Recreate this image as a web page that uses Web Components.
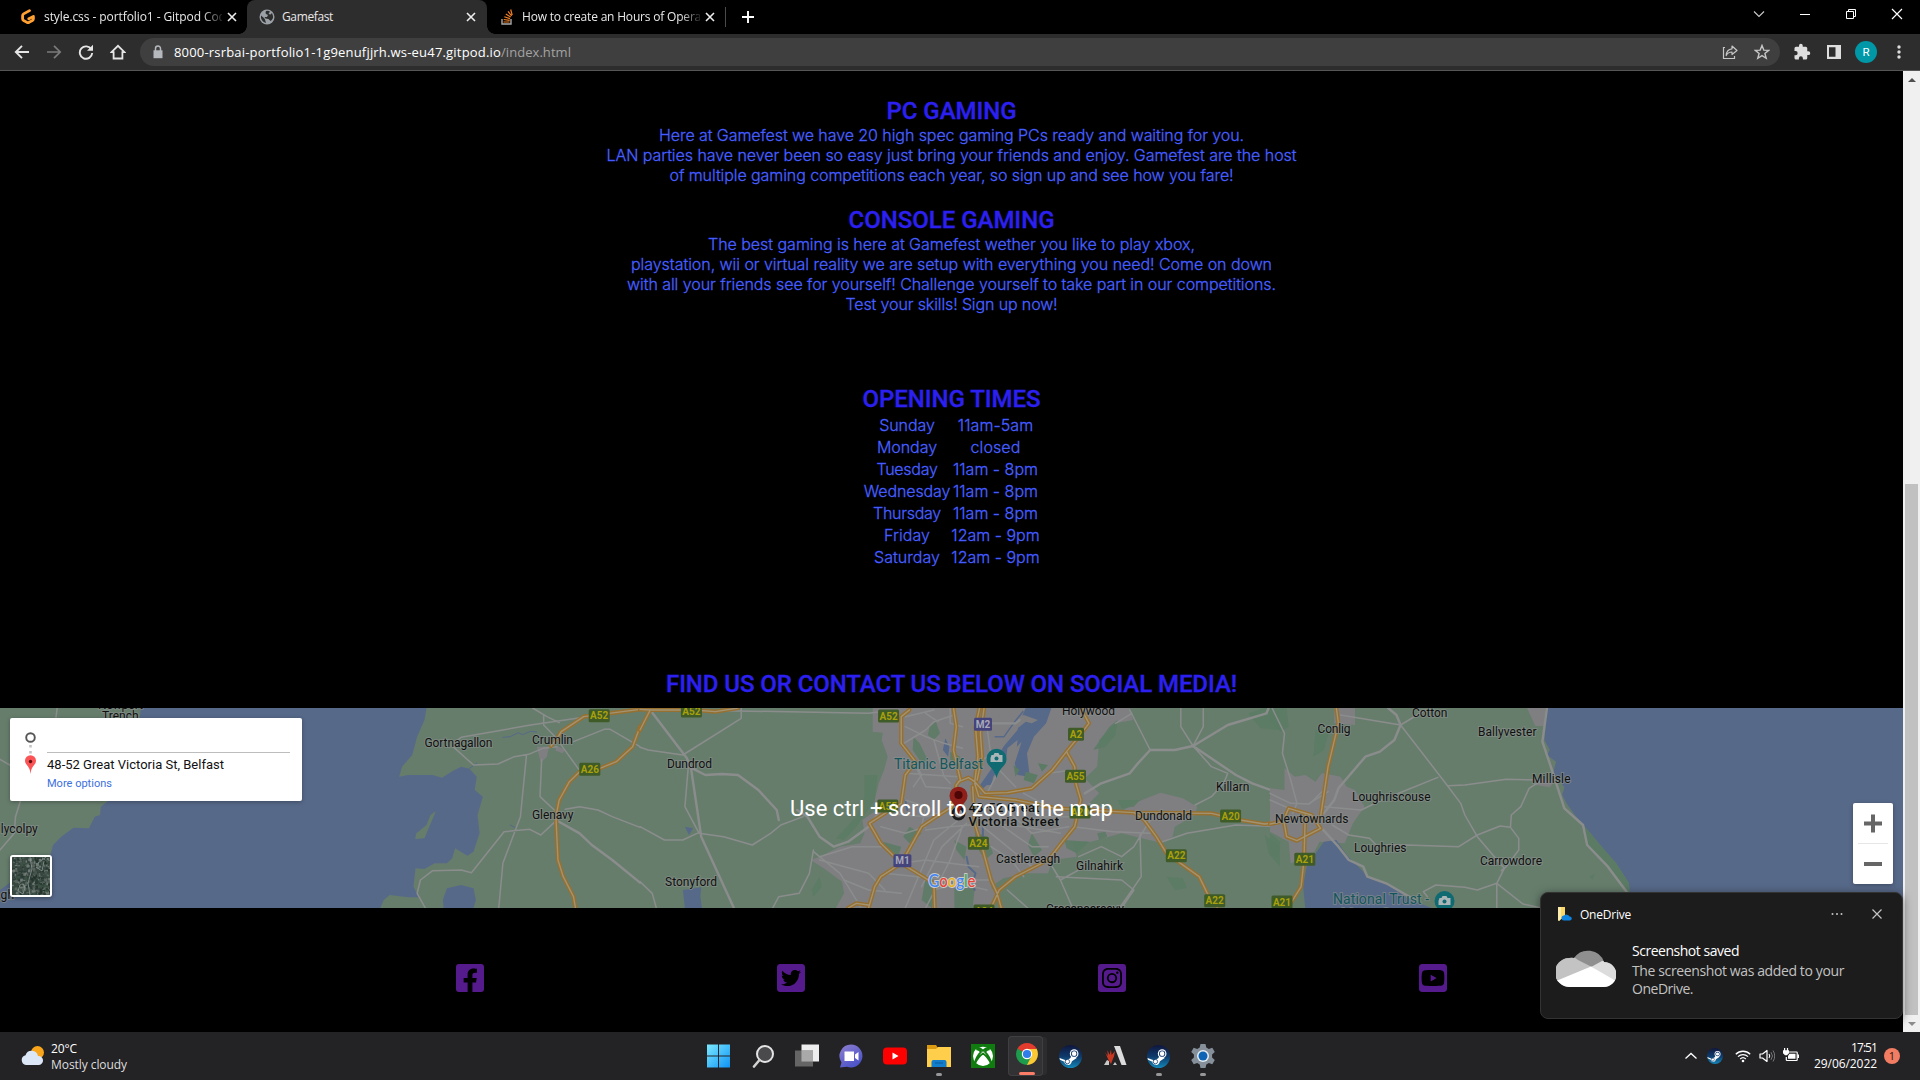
<!DOCTYPE html>
<html lang="en">
<head>
<meta charset="utf-8">
<title>Gamefast</title>
<style>
html,body{margin:0;height:100%;background:#000;overflow:hidden}
</style>
</head>
<body>
<desktop-screen></desktop-screen>

<template id="t-desktop">
<style>
:host{display:flex;flex-direction:column;width:1920px;height:1080px;background:#000;position:relative;font-family:"Open Sans","Liberation Sans",sans-serif}
.view{display:flex;flex:none;height:961px}
toast-card{position:absolute;left:1540px;top:892px}
</style>
<browser-tabs></browser-tabs>
<browser-toolbar></browser-toolbar>
<div class="view"><game-page></game-page><scroll-bar></scroll-bar></div>
<task-bar></task-bar>
<toast-card></toast-card>
</template>

<template id="t-tabs">
<style>
:host{display:flex;height:34px;background:#000;color:#e8e8e8;font-size:12px;justify-content:space-between}
.tabs{display:flex;align-items:stretch}
.tab{display:flex;align-items:center;box-sizing:border-box;width:239px;padding:0 9px 6px 12px;position:relative;height:34px}
.tab svg{flex:none}
.tab .t{margin-left:8px;flex:1;white-space:nowrap;overflow:hidden;line-height:18px}
.first{width:247px;padding-left:20px;padding-right:9px}
.on{background:#2e2d2e;border-radius:8px 8px 0 0;width:240px;padding-right:10px}
.on .t,.last .t{margin-left:7px!important}
.on:before,.on:after{content:"";position:absolute;bottom:0;width:8px;height:8px}
.on:before{left:-8px;background:radial-gradient(circle at 0 0,transparent 7.5px,#2e2d2e 8px)}
.on:after{right:-8px;background:radial-gradient(circle at 100% 0,transparent 7.5px,#2e2d2e 8px)}
.tab .fade{margin-right:4px;-webkit-mask:linear-gradient(90deg,#000 89%,rgba(0,0,0,.15) 100%);mask:linear-gradient(90deg,#000 89%,rgba(0,0,0,.15) 100%)}
.first,.last,.on{padding-top:6px}
.x{width:12px;height:12px}
.last{width:238px;padding-right:9px}
.sep{width:1px;height:20px;background:#4a4a4c;margin:7px 15px 0 0}
.plus{margin-top:10px}
.win{display:flex;padding-right:15px;gap:30px;align-items:center;height:28px}
</style>
<div class="tabs">
 <div class="tab first">
  <svg width="16" height="16" viewBox="0 0 16 16"><path d="M9.500 1.600 3.600 4.900Q2.600 5.500 2.600 6.700V9.800q0 1.100 1 1.700l3.400 1.900q1 .5 2 0l3.400-1.900q1-.6 1-1.700V7.400L8.800 9.800" fill="none" stroke="#ffa033" stroke-width="2.800" stroke-linejoin="round" stroke-linecap="round"/></svg>
  <div class="t fade"><fit-text w="188.500">style.css - portfolio1 - Gitpod Code</fit-text></div>
  <svg class="x" viewBox="0 0 12 12"><path d="M2 2l8 8M10 2l-8 8" stroke="#eee" stroke-width="1.6"/></svg>
 </div>
 <div class="tab on">
  <svg width="16" height="16" viewBox="0 0 16 16"><circle cx="8" cy="8" r="7.5" fill="#9aa0a6"/><path d="M2 6.500l3 2.500 1 1.500 1 3.500Q3 13 2 9zM7 2q-1 2 0 3l2 1-1 2H5.500l1 1.500 3 .5 2 2q3-2 2.500-5l-1-3-1.500 1.500-2-.5L11 2.500Q9 1.500 7 2z" fill="#2e2d2e"/></svg>
  <div class="t"><fit-text w="51">Gamefast</fit-text></div>
  <svg class="x" viewBox="0 0 12 12"><path d="M2 2l8 8M10 2l-8 8" stroke="#eee" stroke-width="1.6"/></svg>
 </div>
 <div class="tab last">
  <svg width="16" height="16" viewBox="0 0 16 16"><path d="M3 10v5h9v-5" fill="none" stroke="#aaa" stroke-width="1.400"/><path d="M4.500 13h6M4.700 10.500l6 .8M5.300 7.800l5.700 1.800M6.800 5l4.900 3.100M9 2.300l3.600 4.600M11.700.5l1.500 5.600" stroke="#f48024" stroke-width="1.200"/></svg>
  <div class="t fade"><fit-text w="186">How to create an Hours of Operati</fit-text></div>
  <svg class="x" viewBox="0 0 12 12"><path d="M2 2l8 8M10 2l-8 8" stroke="#eee" stroke-width="1.6"/></svg>
 </div>
 <div class="sep"></div>
 <svg class="plus" width="14" height="14" viewBox="0 0 14 14"><path d="M7 1v12M1 7h12" stroke="#fff" stroke-width="1.900"/></svg>
</div>
<div class="win">
 <svg width="16" height="16" viewBox="0 0 16 16"><path d="M3 5.500l5 5 5-5" fill="none" stroke="#ccc" stroke-width="1.100"/></svg>
 <svg width="16" height="16" viewBox="0 0 16 16"><path d="M3 8.500h10" stroke="#fff"/></svg>
 <svg width="16" height="16" viewBox="0 0 16 16"><path d="M3.500 5.500h7v7h-7zM5.500 5.500v-2h7v7h-2" fill="none" stroke="#fff"/></svg>
 <svg width="16" height="16" viewBox="0 0 16 16"><path d="M3 3l10 10M13 3L3 13" stroke="#fff" stroke-width="1.200"/></svg>
</div>
</template>

<template id="t-toolbar">
<style>
:host{display:flex;box-sizing:border-box;height:37px;background:#2e2d2e;border-bottom:1px solid #565657;align-items:center;padding:0 13px 0 14px}
.nav{display:flex;gap:16px;width:126px;flex:none}
.box{display:flex;align-items:center;width:1640px;height:28px;border-radius:14px;background:#3f3f3f;box-sizing:border-box;padding:0 10px;font-size:14px;color:#fff;line-height:20px}
.url{margin-left:8px;flex:1;font-size:13px;white-space:nowrap}
.p{color:#a3a3a3}
.star{margin-left:16px}
.r{display:flex;gap:15px;margin-left:13px;align-items:center}
.av{width:22px;height:22px;border-radius:50%;background:#0097a7;color:#fff;font:11.500px/22px Roboto,sans-serif;text-align:center;margin:0 -2px 0 -1px}
svg{flex:none}
</style>
<div class="nav">
 <svg width="16" height="16" viewBox="0 0 16 16"><path d="M15 8H2M8 1.800L1.800 8 8 14.200" fill="none" stroke="#e6e6e6" stroke-width="1.900"/></svg>
 <svg width="16" height="16" viewBox="0 0 16 16"><path d="M1 8h13M8 1.800L14.200 8 8 14.200" fill="none" stroke="#7b7b7b" stroke-width="1.700"/></svg>
 <svg width="16" height="16" viewBox="0 0 16 16"><path d="M13.400 5.500A6.200 6.200 0 1 0 14.200 9" fill="none" stroke="#e6e6e6" stroke-width="1.900"/><path d="M15 .8v6H9z" fill="#e6e6e6"/></svg>
 <svg width="16" height="16" viewBox="0 0 16 16"><path d="M1.500 8.200L8 1.800l6.500 6.400H12.400V14.500H3.600V8.200z" fill="none" stroke="#e6e6e6" stroke-width="1.800"/></svg>
</div>
<div class="box">
 <svg width="16" height="16" viewBox="0 0 16 16"><path d="M3.500 6.300h9v7.900h-9z" fill="#b5b9be"/><path d="M5.500 7V4.500a2.500 2.500 0 0 1 5 0V7" fill="none" stroke="#b5b9be" stroke-width="1.500"/></svg>
 <div class="url"><fit-text w="327">8000-rsrbai-portfolio1-1g9enufjjrh.ws-eu47.gitpod.io</fit-text><fit-text class="p" w="70">/index.html</fit-text></div>
 <svg width="16" height="16" viewBox="0 0 16 16"><path d="M3 3.500H1.500v11h11V12" fill="none" stroke="#c6c6c6" stroke-width="1.200"/><path d="M10 2l5 4.500-5 4V8Q6 8 4.200 11.500 4.600 5.300 10 4.800z" fill="none" stroke="#c6c6c6" stroke-width="1.200" stroke-linejoin="round"/></svg>
 <svg class="star" width="16" height="16" viewBox="0 0 16 16"><path d="M8 1.500l1.800 4.600 4.900.3-3.800 3.100 1.300 4.800L8 11.600l-4.200 2.700 1.300-4.800L1.300 6.400l4.900-.3z" fill="none" stroke="#c6c6c6" stroke-width="1.400"/></svg>
</div>
<div class="r">
 <svg width="18" height="18" viewBox="0 0 24 24"><path fill="#dedede" d="M20.500 11H19V7a2 2 0 0 0-2-2h-4V3.500a2.500 2.500 0 0 0-5 0V5H4a2 2 0 0 0-2 2v3.800h1.500a2.700 2.700 0 0 1 0 5.400H2V20a2 2 0 0 0 2 2h3.800v-1.500a2.700 2.700 0 0 1 5.400 0V22H17a2 2 0 0 0 2-2v-4h1.500a2.500 2.500 0 0 0 0-5z"/></svg>
 <svg width="16" height="16" viewBox="0 0 16 16"><path d="M1 1h14v14H1zM3 3.200v9.600h6.500V3.200z" fill="#dedede" fill-rule="evenodd"/></svg>
</div>
<div class="av" style="margin-left:13px">R</div>
<svg style="margin-left:16px" width="16" height="16" viewBox="0 0 16 16"><g fill="#dedede"><circle cx="8" cy="3" r="1.700"/><circle cx="8" cy="8" r="1.700"/><circle cx="8" cy="13" r="1.700"/></g></svg>
</template>

<template id="t-scroll">
<style>
:host{display:flex;flex-direction:column;width:17px;height:961px;background:#f0f0f0}
.b{height:17px;display:flex;align-items:center;justify-content:center}
.up{border:4px solid transparent;border-top:0;border-bottom:4px solid #505050}
.dn{border:4px solid transparent;border-bottom:0;border-top:4px solid #8b8b8b}
.thumb{margin:396px 2px 0;flex:1;background:#c1c1c1}
</style>
<div class="b"><div class="up"></div></div><div class="thumb"></div><div class="b"><div class="dn"></div></div>
</template>

<template id="t-page">
<style>
:host{display:flex;flex-direction:column;align-items:center;width:1903px;height:961px;background:#000;color:#5069ff;font:300 16px/20px Inter,sans-serif;overflow:hidden;-webkit-text-stroke:.3px #3a50ff}
h2{margin:0;font:500 24px/28px Roboto,sans-serif;color:#2c20f0;white-space:nowrap;-webkit-text-stroke:.35px #2c20f0}
.pc{margin-top:26px}.con{margin-top:21px}.op{margin-top:71px}.find{margin-top:102px}
p{margin:0;display:flex;flex-direction:column;align-items:center}
.times{display:grid;grid-template-columns:87px 88px;column-gap:1px;margin-top:1px;line-height:22px;justify-items:center}
map-view{margin-top:10px;-webkit-text-stroke:0}
.social{display:flex;gap:293px;margin-top:56px}
.social svg{display:block;fill:#551a8b}
</style>
<h2 class="pc"><fit-text w="130">PC GAMING</fit-text></h2>
<p><fit-text w="585">Here at Gamefest we have 20 high spec gaming PCs ready and waiting for you.</fit-text>
<fit-text w="690">LAN parties have never been so easy just bring your friends and enjoy. Gamefest are the host</fit-text>
<fit-text w="564">of multiple gaming competitions each year, so sign up and see how you fare!</fit-text></p>
<h2 class="con"><fit-text w="206">CONSOLE GAMING</fit-text></h2>
<p><fit-text w="487">The best gaming is here at Gamefest wether you like to play xbox,</fit-text>
<fit-text w="641">playstation, wii or virtual reality we are setup with everything you need! Come on down</fit-text>
<fit-text w="649">with all your friends see for yourself! Challenge yourself to take part in our competitions.</fit-text>
<fit-text w="212">Test your skills! Sign up now!</fit-text></p>
<h2 class="op"><fit-text w="178">OPENING TIMES</fit-text></h2>
<div class="times">
<fit-text w="55.500">Sunday</fit-text><fit-text w="75.500">11am-5am</fit-text>
<fit-text w="60">Monday</fit-text><fit-text w="50">closed</fit-text>
<fit-text w="61">Tuesday</fit-text><fit-text w="85">11am - 8pm</fit-text>
<fit-text w="86.500">Wednesday</fit-text><fit-text w="85">11am - 8pm</fit-text>
<fit-text w="68">Thursday</fit-text><fit-text w="85">11am - 8pm</fit-text>
<fit-text w="46">Friday</fit-text><fit-text w="88.300">12am - 9pm</fit-text>
<fit-text w="66">Saturday</fit-text><fit-text w="88.300">12am - 9pm</fit-text>
</div>
<h2 class="find"><fit-text w="571">FIND US OR CONTACT US BELOW ON SOCIAL MEDIA!</fit-text></h2>
<map-view></map-view>
<div class="social">
<svg width="28" height="28" viewBox="0 32 448 448"><path d="M400 32H48A48 48 0 0 0 0 80v352a48 48 0 0 0 48 48h137.250V327.690h-63V256h63v-54.640c0-62.150 37-96.480 93.670-96.480 27.140 0 55.520 4.840 55.520 4.840v61h-31.270c-30.810 0-40.420 19.120-40.420 38.730V256h68.780l-11 71.690h-57.780V480H400a48 48 0 0 0 48-48V80a48 48 0 0 0-48-48z"/></svg>
<svg width="28" height="28" viewBox="0 32 448 448"><path d="M400 32H48C21.500 32 0 53.500 0 80v352c0 26.500 21.500 48 48 48h352c26.500 0 48-21.500 48-48V80c0-26.500-21.500-48-48-48zm-48.900 158.800c.2 2.800.2 5.700.2 8.500 0 86.700-66 186.600-186.600 186.600-37.200 0-71.700-10.800-100.700-29.400 5.300.6 10.400.8 15.800.8 30.700 0 58.900-10.400 81.400-28-28.800-.6-53-19.500-61.300-45.500 10.100 1.500 19.200 1.500 29.600-1.200-30-6.100-52.500-32.500-52.500-64.400v-.8c8.700 4.900 18.900 7.900 29.600 8.300a65.447 65.447 0 0 1-29.200-54.600c0-12.200 3.200-23.400 8.900-33.100 32.300 39.800 80.800 65.800 135.200 68.600-9.300-44.500 24-80.600 64-80.600 18.900 0 35.900 7.900 47.900 20.700 14.800-2.800 29-8.300 41.600-15.800-4.900 15.200-15.200 28-28.800 36.100 13.200-1.400 26-5.100 37.800-10.200-8.900 13.100-20.100 24.700-32.900 34z"/></svg>
<svg width="28" height="28" viewBox="0 32 448 448"><path d="M224 202.660A53.340 53.340 0 1 0 277.360 256 53.380 53.380 0 0 0 224 202.660zm124.710-41a54 54 0 0 0-30.410-30.410c-21-8.290-71-6.430-94.300-6.430s-73.250-1.930-94.310 6.430a54 54 0 0 0-30.410 30.410c-8.280 21-6.430 71.050-6.430 94.330s-1.850 73.270 6.470 94.340a54 54 0 0 0 30.410 30.410c21 8.290 71 6.430 94.310 6.430s73.240 1.930 94.300-6.430a54 54 0 0 0 30.410-30.410c8.350-21 6.430-71.050 6.430-94.330s1.920-73.260-6.430-94.330zM224 338a82 82 0 1 1 82-82 81.900 81.900 0 0 1-82 82zm85.380-148.300a19.140 19.140 0 1 1 19.130-19.140 19.100 19.100 0 0 1-19.090 19.180zM400 32H48A48 48 0 0 0 0 80v352a48 48 0 0 0 48 48h352a48 48 0 0 0 48-48V80a48 48 0 0 0-48-48zm-17.120 290c-1.290 25.630-7.140 48.340-25.850 67s-41.400 24.630-67 25.850c-26.410 1.490-105.590 1.490-132 0-25.630-1.290-48.260-7.150-67-25.850s-24.630-41.420-25.850-67c-1.490-26.420-1.490-105.610 0-132 1.290-25.630 7.070-48.340 25.850-67s41.470-24.560 67-25.780c26.410-1.490 105.590-1.490 132 0 25.630 1.290 48.330 7.150 67 25.850s24.630 41.420 25.850 67.050c1.490 26.320 1.490 105.440 0 131.880z"/></svg>
<svg width="28" height="28" viewBox="0 32 448 448"><path d="M186.800 202.100l95.200 54.100-95.200 54.100V202.100zM448 80v352c0 26.500-21.500 48-48 48H48c-26.500 0-48-21.500-48-48V80c0-26.500 21.500-48 48-48h352c26.500 0 48 21.500 48 48zm-42 176.300s0-59.600-7.600-88.200c-4.200-15.800-16.500-28.200-32.200-32.400C337.900 128 224 128 224 128s-113.900 0-142.200 7.700c-15.700 4.200-28 16.600-32.200 32.400-7.600 28.500-7.600 88.200-7.600 88.200s0 59.600 7.600 88.200c4.200 15.800 16.500 27.700 32.200 31.900C110.100 384 224 384 224 384s113.900 0 142.200-7.700c15.700-4.200 28-16.100 32.200-31.900 7.600-28.500 7.600-88.100 7.600-88.100z"/></svg>
</div>
</template>

<template id="t-map">
<style>
:host{display:block;width:1903px;height:200px;position:relative;overflow:hidden;flex:none}
.map{display:block}
.g path{vector-effect:non-scaling-stroke;stroke-linejoin:round;stroke-linecap:round}
.w path{fill:none;stroke:#8b8d8d;stroke-width:1.500}
.w .b{stroke-width:2.400}
.h path{fill:none;stroke:#97702f;stroke-width:4.200}
.h2 path{fill:none;stroke:#a29374;stroke-width:1.400}
.wa{fill:#576989}.u{fill:#7f7f82}.k{fill:#5b7b64}
text{font-family:Roboto,sans-serif;font-weight:400}
.l text{font-size:12px;fill:#101010;stroke:#8b908d;stroke-width:2px;paint-order:stroke;stroke-opacity:.6;font-weight:400}
.l .teal{fill:#14565c;font-size:14px}
.l .bold{font-weight:500;font-size:13px}
.panel{position:absolute;left:10px;top:10px;width:292px;height:83px;box-sizing:border-box;background:#fff;border-radius:2px;box-shadow:0 1px 4px rgba(0,0,0,.3);display:flex;padding:14px 12px 0 13px;font:13px/16px Roboto,sans-serif}
.dir{flex:1;margin-left:9px;color:#111}
.line{height:20px;border-bottom:1px solid #bdbdbd;margin-bottom:4px}
.more{font-size:11px;color:#3b6fe0;margin-top:4px;line-height:14px}
.zoom{position:absolute;left:1853px;top:95px;width:40px;height:81px;background:#fff;border-radius:2px;box-shadow:0 1px 4px rgba(0,0,0,.3)}
.sat{position:absolute;left:10px;top:147px;width:38px;height:38px;border:2px solid #fff;border-radius:3px;box-shadow:0 1px 4px rgba(0,0,0,.4);overflow:hidden}
.sat svg,.zoom svg{display:block}
.msg{position:absolute;left:790px;top:87px;color:#fff;font:22px/28px Roboto,sans-serif}
</style>
<svg class="map" width="1903" height="200" viewBox="0 0 1903 200">
<rect width="1903" height="200" fill="#667d6c"/>
<g class="g" transform="translate(0 -8) scale(.408163 .333333)">
 <path class="wa" d="M345 24H1045L1040 60 1022 110 1010 165 985 200 978 230 1000 225 1060 225 1083 233 1110 212 1130 200 1150 206 1168 230 1163 270 1183 290 1170 345 1175 400 1160 455 1145 467 1115 445 1108 475 1095 490 1065 490 1040 507 1018 505 1013 560 1027 592 1000 592 955 585 940 600 932 624H0V570L24 548 70 500 122 470 130 435 150 410 180 383 218 385 232 350 245 345 247 320 265 303 330 200Z"/>
 <path fill="#667d6c" d="M1068 333L1045 400 1040 415 1017 417 1020 400 1045 375 1055 345Z"/>
 <path class="wa" d="M1085 600L1095 565 1130 555 1160 565 1166 600 1160 624H1087Z"/>
 <path class="u" d="M1315 140L1345 140 1340 170 1325 188ZM1360 135L1385 150 1378 160 1362 152Z"/>
 <path d="M1232 112L1250 110 1270 98 1280 104 1300 94 1315 96M1150 205L1168 190M1250 375L1265 385" fill="none" stroke="#576989"/>
 <g class="w">
  <path d="M1110 130L1130 112 1300 75 1430 52M1110 140L1160 195 1220 192 1260 170 1295 163 1330 145 1365 140M1290 165L1275 350 1232 490 1222 624M1327 180L1323 290 1358 330M1360 365L1325 405 1298 388 1235 395 1155 518 1130 510 1060 512 1030 540 1022 580 1042 624M1385 328L1420 320 1465 330 1500 350 1568 382M1305 24L1340 50 1370 68M1332 45V75L1360 110 1418 208M1405 125L1480 88 1495 88 1568 140M140 24L137 54M50 303L38 350 35 400 0 450M0 178L24 195"/>
  <path class="b" d="M1362 360L1420 400 1450 435 1500 480 1568 548"/>
 </g>
 <g class="h"><path d="M1568 28L1430 50 1375 95 1365 115 1350 138M1568 80L1550 140 1510 185 1470 205 1420 215 1395 245 1370 300 1362 350 1367 480 1380 530 1405 590 1410 624"/></g>
 <g class="h2"><path d="M1568 28L1430 50 1375 95 1365 115 1350 138M1568 80L1550 140 1510 185 1470 205 1420 215 1395 245 1370 300 1362 350 1367 480 1380 530 1405 590 1410 624"/></g>
</g>
<g class="g" transform="translate(640 -48) scale(.408163 .333333)">
 <path class="u" d="M570 144V215L595 218 592 240 607 290 598 330 585 370 575 420 580 450 545 480 550 520 540 550 490 560 440 590 418 600 450 625 495 665 500 700 480 744H868L872 700 860 680 890 655 950 640 1000 640 1010 600 1070 590 1060 545 1105 545 1180 520 1275 548 1305 530 1310 500 1360 465 1365 440 1330 415 1275 398 1210 430 1180 455 1100 430 1125 400 1090 355 1120 320 1125 240 1165 190 1208 180 1200 144Z"/>
 <path class="k" d="M1110 270L1150 200 1170 180 1165 225 1140 260ZM710 200L725 185 735 220 720 240 705 225ZM670 230L685 250 705 300 690 310 668 270ZM760 275L785 290 780 310 760 300ZM820 515L850 530 865 580 845 600 825 560ZM660 500L690 520 660 550 645 530ZM1040 540L1100 545 1070 580 1045 565ZM960 520L985 570 965 590 950 555ZM770 540L800 560 795 600 775 570ZM770 685L820 685 815 744H770ZM550 345L582 345 575 420 530 500 500 540 480 535 530 470 550 410ZM700 650L725 690 715 744 690 720ZM1120 520L1140 515 1145 530 1125 540ZM595 545L640 560 630 600 615 580ZM1490 160L1530 144H1568V210L1520 205ZM1530 525L1568 560V620L1540 580ZM420 690L440 650 445 680 425 710ZM1290 650L1330 655 1340 685 1310 690ZM1170 420L1225 420 1210 440 1180 445Z" opacity=".85"/>
 <path class="wa" d="M888 144H1008L995 190 965 230 948 280 955 350 925 345 918 310 935 245 905 285 850 375 838 388 830 380 862 325 890 260 925 210 932 165ZM748 235L758 260 755 290 742 270ZM110 500L130 505 120 525ZM105 690L150 682 148 710 152 744H110ZM840 375L865 350 862 375Z"/>
 <path d="M800 590L805 620 822 640 815 670 820 690M840 490V530M650 420L655 450" fill="none" stroke="#576989" stroke-width="2"/>
 <path class="u" d="M885 144H945L935 172 920 195 905 230 870 300 862 250ZM920 180L940 165 975 180 960 190 945 185 925 205ZM900 265L925 240 920 300 895 320Z"/>
 <path d="M870 230L892 230 915 190 938 155" fill="none" stroke="#576989" stroke-width="1.500"/>
 <path class="k" d="M945 335L975 345 965 370 940 360ZM915 315L930 330 920 350ZM975 310L1000 315 985 335Z"/>
 <g class="w">
  <path d="M0 262L20 270 105 285 248 175V144M205 152L560 160 590 155M118 325L110 440 145 520 205 530 275 555 320 520 345 495 400 470M425 570L415 640 390 700 340 710 325 744M425 575L490 640 540 740M0 500L60 540 105 540 145 517M0 665L30 700 40 744M1165 190L1205 160M1200 150L1250 270M1325 144V200L1355 258 1380 200V144M1355 258L1400 320 1440 340 1430 370 1400 410 1360 435M1225 520L1228 650 1175 744M1280 545L1340 520 1460 495 1568 500M1060 500L1160 515 1250 520M1075 590L1130 560 1180 590 1210 560 1250 480M1030 660L1060 744M1020 650L1180 660 1210 690 1180 744M1000 600L1030 660 1090 620"/>
  <path d="M640 255L700 210 720 185 770 165M650 200L700 230 745 250 790 265M680 330L700 380 760 385M665 290L690 345 670 380M650 340L780 350M720 240L745 350 760 370M600 460L700 470 760 450M590 500L650 520 700 500M650 420L700 440 690 500M700 510L760 500 860 490 940 500 1030 520M780 480L720 540 650 744M800 490L740 560 690 680M790 500L760 600 700 744M840 500L900 560 960 620M870 430L890 500 960 560 1000 560M900 450L960 520 1050 500M860 560L910 600 940 650M640 610L700 600 760 610 830 620M600 640L680 650 760 660 860 660M850 400L880 330 920 380M850 200L860 290 830 300M760 144V190L790 200M600 560L520 560 440 590M440 600L560 640 600 690M500 660L560 690 640 700M720 690L780 670 850 690M900 690L950 744M930 420L980 470 1060 470M1000 340L1060 330M940 400L1000 440M1100 430L1140 460M650 170L720 150M700 160L730 185"/>
  <path class="b" d="M25 150L115 295 125 325 150 530 230 744M120 320L160 345 200 342 240 345 290 390 335 450 340 480M385 450L410 470 440 530 475 560 510 545 560 500 590 450M1250 270L1310 270 1355 258 1440 195 1535 160 1540 144M1250 270L1220 310 1200 340 1130 370 1090 400M1355 258L1460 345 1500 370 1568 400M840 190H920L930 180"/>
 </g>
 <g class="h"><path d="M832 144L822 200 828 290 820 365M843 144L834 220 838 290 826 360M768 144L775 200 768 270 785 360 775 375 765 440 720 475 690 500 640 610 590 650 575 680 560 744M780 365L805 353 820 365 845 400 900 398 960 385 1010 330 1045 275 1075 230 1100 190 1080 144M1045 275L1065 320 1068 370 1080 420 1065 500 1035 545 1000 600 920 650 880 690 860 744M820 370L830 410 920 420 1020 445 1210 458 1400 460 1470 480 1530 492 1568 487M815 380L820 490 840 570 860 660 875 700 885 744M660 150L640 170 640 250 675 305 650 345 640 430 600 460 562 490 590 550 640 610 720 670 722 744M1210 458L1235 480 1265 530 1290 580 1370 650 1390 700 1415 744M0 210L25 150 130 150 185 155 240 144M0 148L25 150M510 744L530 730 560 735"/></g>
 <g class="h2"><path d="M832 144L822 200 828 290 820 365M843 144L834 220 838 290 826 360M768 144L775 200 768 270 785 360 775 375 765 440 720 475 690 500 640 610 590 650 575 680 560 744M780 365L805 353 820 365 845 400 900 398 960 385 1010 330 1045 275 1075 230 1100 190 1080 144M1045 275L1065 320 1068 370 1080 420 1065 500 1035 545 1000 600 920 650 880 690 860 744M820 370L830 410 920 420 1020 445 1210 458 1400 460 1470 480 1530 492 1568 487M815 380L820 490 840 570 860 660 875 700 885 744M660 150L640 170 640 250 675 305 650 345 640 430 600 460 562 490 590 550 640 610 720 670 722 744M1210 458L1235 480 1265 530 1290 580 1370 650 1390 700 1415 744M0 210L25 150 130 150 185 155 240 144M0 148L25 150M510 744L530 730 560 735"/></g>
</g>
<g class="g" transform="translate(1270 -8) scale(.414594 .333333)">
 <path class="k" d="M0 24H40L45 80 25 95 0 60ZM110 90L145 85 130 150 105 170ZM0 400L25 425 20 470 0 465ZM125 385L150 400 145 425 125 420ZM770 530L785 520 778 540Z" opacity=".85"/>
 <path class="wa" d="M668 24H1568V624H868L866 550 835 490 800 440 770 395 735 345 715 310 705 285 710 262 683 218 690 185 668 165 675 150 662 120Z"/>
 <path class="k" d="M755 375L770 395 800 440 835 490 866 550 868 580 815 500 765 435Z"/>
 <path class="u" d="M35 205L60 230 85 225 110 245 125 220 150 225 170 230 185 260 205 270 228 320 200 370 180 430 120 425 105 460 50 490 45 425 0 395V265L35 270ZM620 24H665L660 78H640ZM155 24H205V75L155 70ZM640 255L655 235 685 245 675 262Z"/>
 <path class="wa" d="M160 420L185 465 225 515 232 530 285 555 340 600 390 624H85L80 560 88 500 110 460 130 425Z"/>
 <g class="w">
  <path d="M170 45L315 75 375 30M430 257L470 255 570 238 650 240M405 232L300 285M650 245L625 265 605 320 582 345 580 382M280 436L330 435 455 440 500 405 555 378 580 382 600 415 600 450 570 500 558 512M547 550L610 612 655 624M547 550L500 570 470 562 400 555 370 575 380 590M547 550V624M130 320L220 330 270 300M150 375L190 405 240 415 260 440M5 24L35 100 30 160 50 240 65 310 55 340M0 300L55 330M95 310L140 275"/>
  <path d="M315 75L430 260 460 310 470 345 500 410 565 505 547 550M0 280L50 310 95 312 130 270"/>
  <path class="b" d="M285 24L305 45 315 75 300 120 265 155 230 170 165 265 155 300 130 340M668 24L657 125 680 210 710 325 755 375 765 435 815 500 860 575M125 385L165 440 190 480 225 500 235 530 280 550 350 600"/>
 </g>
 <g class="h"><path d="M160 24L165 70 140 200 122 350M122 385L100 345 45 325 33 360 40 410 65 422 122 385M0 372L30 365M85 345L82 480 75 560 55 600 40 624"/></g>
 <g class="h2"><path d="M160 24L165 70 140 200 122 350M122 385L100 345 45 325 33 360 40 410 65 422 122 385M0 372L30 365M85 345L82 480 75 560 55 600 40 624"/></g>
</g>
<g id="shields"></g>
<g class="l" id="labels"></g>
<g transform="translate(996.500 50)"><path d="M0 20Q-2 13-7 8A10 10 0 1 1 7 8Q2 13 0 20Z" fill="#0f6a72"/><path d="M-5-3h2l1-2h4l1 2h3v7H-6V0" fill="#a9b5b6"/><circle cy=".5" r="2" fill="#0f6a72"/></g>
<g transform="translate(1444.500 193)"><circle r="10" fill="#0f6a72"/><path d="M-5-3h2l1-2h4l1 2h3v7H-6V0" fill="#a9b5b6"/><circle cy=".5" r="2" fill="#0f6a72"/></g>
<circle cx="958.500" cy="105.500" r="5.500" fill="#999" stroke="#1c1c1c" stroke-width="3"/>
<path d="M958.500 108Q957 99 952 94A9 9 0 1 1 965 94Q960 99 958.500 108Z" fill="#8e1f19"/><circle cx="958.500" cy="87" r="4" fill="#4b0605"/>
<text x="928.500" y="178.500" textLength="47" lengthAdjust="spacingAndGlyphs" style="font:500 17px Lato,sans-serif;paint-order:stroke" stroke="#c9cccb" stroke-width="2"><tspan fill="#4285f4">G</tspan><tspan fill="#ea4335">o</tspan><tspan fill="#e8b019">o</tspan><tspan fill="#4285f4">g</tspan><tspan fill="#34a853">l</tspan><tspan fill="#ea4335">e</tspan></text>
</svg>
<div class="msg"><fit-text w="323">Use ctrl + scroll to zoom the map</fit-text></div>
<div class="panel">
 <svg width="15" height="50" viewBox="0 0 15 50"><circle cx="7.500" cy="5.500" r="4.300" fill="none" stroke="#555" stroke-width="1.900"/><path d="M7.500 13v10" stroke="#c4c4c4" stroke-width="2.600" stroke-dasharray="2.500 3.500"/><path d="M7.500 42Q7 36 3.500 32.500A5.500 5.500 0 1 1 11.500 32.500Q8 36 7.500 42Z" fill="#fb5457"/><circle cx="7.500" cy="29.500" r="1.700" fill="#5e0c0c"/></svg>
 <div class="dir"><div class="line"></div><fit-text w="177">48-52 Great Victoria St, Belfast</fit-text><div class="more"><fit-text w="65">More options</fit-text></div></div>
</div>
<div class="zoom"><svg width="40" height="81" viewBox="0 0 40 81"><path d="M11 20.500h18M20 11.500v18M11 61h18" stroke="#666" stroke-width="4"/><path d="M5 40.500h30" stroke="#e6e6e6"/></svg></div>
<div class="sat"><svg width="38" height="38" viewBox="0 0 38 38"><rect width="38" height="38" fill="#37463f"/><g id="sat"></g><path d="M26 6l8-6M24 10l6 4 2-10M18 0l2 12-4 14 2 12M8 28q4-3 5 3l-2 6-5-3z" stroke="#8d9896" fill="none" stroke-width=".8"/></svg></div>
</template>

<template id="t-toast">
<style>
:host{display:flex;flex-direction:column;box-sizing:border-box;width:363px;height:127px;background:#1c1c1c;border:1px solid #333;border-radius:8px;box-shadow:0 2px 10px rgba(0,0,0,.5);color:#fff;padding:12px 15px 0 14px}
.h{display:flex;align-items:center;height:18px;font-size:12px}
.h fit-text{margin-left:8px}.h>svg:first-child{margin-left:1px}.sp{flex:1}
.b{display:flex;margin-top:19px;font-size:14px;line-height:18px}
.b>svg{margin:6px 16px 0 1px;flex:none}
.m{color:#c2c2c2;display:flex;flex-direction:column;margin-top:2px}
.t{height:18px}
</style>
<div class="h"><svg width="16" height="16" viewBox="0 0 16 16"><path d="M2 1h7v12H5l-2 2-1-1z" fill="#fbd768"/><path d="M2 1h3v12l-2 2-1-1z" fill="#fdecb0"/><path d="M8 14.500a2.500 2.500 0 0 1 0-5 3.500 3.500 0 0 1 5.500 1 2 2 0 0 1 .5 4z" fill="#0f83e0"/></svg><fit-text w="51">OneDrive</fit-text><span class="sp"></span>
<svg width="14" height="14" viewBox="0 0 14 14"><g fill="#c4c4c4"><circle cx="2.500" cy="7" r="1"/><circle cx="7" cy="7" r="1"/><circle cx="11.500" cy="7" r="1"/></g></svg>
<svg style="margin:0 4px 0 27px" width="12" height="12" viewBox="0 0 12 12"><path d="M1.500 1.500l9 9M10.500 1.500l-9 9" stroke="#c4c4c4" stroke-width="1.200"/></svg></div>
<div class="b"><svg width="60" height="40" viewBox="0 0 60 40"><defs><clipPath id="c"><path d="M14 39A14 14 0 0 1 13 10Q16 9.500 18 10A17 17 0 0 1 48 14A12.500 12.500 0 0 1 48 39Z"/></clipPath></defs><g clip-path="url(#c)"><path d="M0 0h60v40H0z" fill="#8f8f8f"/><path d="M0 8Q14 5 22 12L36 19 3 33H0z" fill="#c3c3c3"/><path d="M35 19L46 13 60 12V33L56 32z" fill="#dcdcdc"/><path d="M0 33L35 18.500 60 33V40H0z" fill="#fff"/></g></svg>
<div><div class="t"><fit-text w="107">Screenshot saved</fit-text></div><div class="m"><fit-text w="212">The screenshot was added to your</fit-text><fit-text w="61">OneDrive.</fit-text></div></div></div>
</template>

<template id="t-task">
<style>
:host{display:flex;height:48px;background:#232225;color:#fff;font-size:12px;line-height:16px;align-items:center;position:relative}
.we{display:flex;width:697px;padding:1px 0 0 20px;box-sizing:border-box;gap:5px;align-items:center;flex:none}
.we svg{margin-top:-2px}
.we div{display:flex;flex-direction:column}
.apps{display:flex;flex:none}
.apps span{width:44px;height:48px;display:flex;align-items:center;justify-content:center;position:relative}
.run:after{content:"";position:absolute;left:19px;top:41px;width:6px;height:3px;border-radius:2px;background:#979797}
.apps .act{background:#323234;border-radius:4px;box-shadow:inset 0 0 0 1px #3f3f41,5px 0 0 -1px #2c2c2e;height:40px;width:35px;margin:4px 6px 0 3px}
.act:after{content:"";position:absolute;left:11px;bottom:1px;width:16px;height:3px;border-radius:2px;background:#fb7d67}
.tray{flex:1;display:flex;align-items:center;justify-content:flex-end;padding-right:20px}
.clk{display:flex;flex-direction:column;align-items:flex-end;margin:0 7px 0 15px}
.bd{width:16px;height:16px;border-radius:50%;background:#f27d63;color:#2a1512;font-size:11px;line-height:16px;text-align:center}
.lo{color:#dedede}
</style>
<div class="we"><svg width="26" height="22" viewBox="0 0 26 22"><circle cx="17.500" cy="7.500" r="6.500" fill="#f8a51b"/><path d="M6 20a5 5 0 0 1-.5-9.800A6.500 6.500 0 0 1 18 11a4.500 4.500 0 0 1 1 9z" fill="#dbe7f7"/></svg>
<div><fit-text w="26">20°C</fit-text><fit-text class="lo" w="76">Mostly cloudy</fit-text></div></div>
<div class="apps">
<span><svg width="24" height="24" viewBox="0 0 24 24"><defs><linearGradient id="w" x2="1" y2="1"><stop stop-color="#7be9ff"/><stop offset="1" stop-color="#0f93f5"/></linearGradient></defs><path fill="url(#w)" d="M0 .500h11v11H0zM12 .500h11v11H12zM0 12.500h11v11H0zM12 12.500h11v11H12z"/></svg></span>
<span><svg width="24" height="24" viewBox="0 0 24 24"><circle cx="14" cy="10" r="8" fill="#4a4a4c" stroke="#e4e4e4" stroke-width="2"/><path d="M8.500 16L3 22.500" stroke="#d2d2d2" stroke-width="2.600" stroke-linecap="round"/></svg></span>
<span><svg width="24" height="24" viewBox="0 0 24 24"><path fill="#eee" d="M6.500.500h17.500v17H6.500z"/><path fill="#6b6b6b" opacity=".93" d="M0 6.500h18v16H0z"/><path fill="#a9a9a9" d="M6.500 6.500H18v11H6.500z"/></svg></span>
<span><svg width="24" height="24" viewBox="0 0 24 24"><defs><linearGradient id="ch" x2=".6" y2="1"><stop stop-color="#8f7fd0"/><stop offset="1" stop-color="#4b53c7"/></linearGradient></defs><path d="M12 .500a11.500 11.500 0 1 1-4 22.300L1 23.500 2.500 18.500A11.500 11.500 0 0 1 12 .500z" fill="url(#ch)"/><path d="M5.500 7.500h9.500v9.500H5.500zM16 10.500l3.500-2.500v8.500L16 14z" fill="#fff"/></svg></span>
<span><svg width="24" height="24" viewBox="0 0 24 24"><rect y="3.500" width="24" height="17" rx="4" fill="#f00"/><path d="M9.500 8.500l6 3.500-6 3.500z" fill="#fff"/></svg></span>
<span class="run"><svg width="24" height="24" viewBox="0 0 24 24"><path d="M0 1h9l2 3v3H0z" fill="#dc9a10"/><path d="M0 5h9l2-2h13v20H0z" fill="#ffcf4b"/><path d="M4.500 23v-5a2 2 0 0 1 2-2h11a2 2 0 0 1 2 2v5z" fill="#117dcb"/><path d="M8 19h8" stroke="#0a5a9a"/></svg></span>
<span><svg width="24" height="24" viewBox="0 0 24 24"><path fill="#107c10" d="M0 0h24v24H0z"/><circle cx="12" cy="12" r="10" fill="#fff"/><path d="M12 6.800Q7 2.500 5 4.300 8 1.600 12 1.700 16 1.600 19 4.300 17 2.500 12 6.800zM4 19Q5 13 10 7.800 7.500 5 5.200 5.300M20 19Q19 13 14 7.800 16.500 5 18.800 5.300M4 19.500Q7 13 12 9.500 17 13 20 19.500" fill="none" stroke="#107c10" stroke-width="1.900"/></svg></span>
<span class="act"><svg width="22" height="22" viewBox="0 0 22 22" style="margin:-4px 0 0 3px"><path d="M11 11L1.500 5.500A11 11 0 0 1 20.500 5.500z" fill="#e33b2e"/><path d="M11 11l9.500-5.500A11 11 0 0 1 11 22z" fill="#fcc934"/><path d="M11 11L1.500 5.500A11 11 0 0 0 11 22l4.300-8.500z" fill="#1e9b4c"/><path d="M11 6h9.800L16 12z" fill="#fcc934"/><path d="M1.500 5.500L11 5.500V11z" fill="#e33b2e"/><circle cx="11" cy="11" r="5.200" fill="#fff"/><circle cx="11" cy="11" r="4.100" fill="#2f7de9"/></svg></span>
<span><steam-mark style="margin-left:-1px"></steam-mark></span>
<span><svg width="24" height="24" viewBox="0 0 24 24"><path d="M11 2h6l6.500 19h-5z" fill="#dcdcdc"/><path d="M1 21l3-5 2 1v4zM10 21h4l-2-3z" fill="#c9c9c9"/><path d="M2 8l2.600 4L4.500 6l2 5L8 5.500l.6 5.500L12 7l-1 5.500-1.500 3.500L8 20 5.500 16z" fill="#c63a24"/></svg></span>
<span class="run"><steam-mark style="margin-left:-1px"></steam-mark></span>
<span class="run"><svg width="24" height="24" viewBox="0 0 24 24"><path d="M9.500 0h5l.8 3.500 2.500 1.400 3.500-1.200 2.500 4.300L21.100 10.600v2.800L23.800 16l-2.500 4.300-3.500-1.200-2.500 1.400L14.500 24h-5l-.8-3.500-2.500-1.400-3.500 1.200L.2 16l2.700-2.600v-2.800L.2 8l2.500-4.300 3.500 1.200 2.500-1.400z" fill="#85909a"/><circle cx="12" cy="12" r="6" fill="#e6edf3"/><circle cx="12" cy="12" r="4.500" fill="#0d63b4"/></svg></span>
</div>
<div class="tray">
<svg width="14" height="14" viewBox="0 0 14 14"><path d="M1.500 9.500L7 4.500l5.500 5" fill="none" stroke="#fff" stroke-width="1.300"/></svg>
<steam-mark style="--s:16px;margin-left:9px"></steam-mark>
<svg style="margin-left:12px" width="16" height="16" viewBox="0 0 16 16"><path d="M.800 6.200a10.300 10.300 0 0 1 14.400 0M3 8.600a7.200 7.200 0 0 1 10 0M5.200 11a4.100 4.100 0 0 1 5.600 0" fill="none" stroke="#fff" stroke-width="1.300"/><circle cx="8" cy="13" r="1.300" fill="#fff"/></svg>
<svg style="margin-left:8px" width="16" height="16" viewBox="0 0 16 16"><path d="M1 6h2.500L8 2.500v11L3.500 10H1z" fill="none" stroke="#fff" stroke-width="1.200" stroke-linejoin="round"/><path d="M10 6q1.500 2 0 4" fill="none" stroke="#fff" stroke-width="1.100"/><path d="M12 4.200q3 3.800 0 7.600M14 2.500q3.500 5.500 0 11" fill="none" stroke="#77777a"/></svg>
<svg style="margin-left:8px" width="16" height="16" viewBox="0 0 16 16"><path d="M6 4h7.500q.7 0 .7.700v7.100q0 .7-.7.700H4q-.7 0-.7-.7V9" fill="none" stroke="#fff" stroke-width="1.200"/><path d="M6.500 5.800H12.500v5H5V8zM14.500 6.500h1.500v3.500h-1.500zM0 2.200h6v3l-2 2H2L0 5.200zM1 0h1.200v3H1zM3.900 0h1.200v3H3.900z" fill="#fff"/></svg>
<div class="clk"><fit-text w="26">17:51</fit-text><fit-text w="63">29/06/2022</fit-text></div>
<div class="bd">1</div>
</div>
</template>

<template id="t-steam">
<style>:host{display:block;width:var(--s,23px);height:var(--s,23px)}svg{display:block;width:100%;height:100%}</style>
<svg viewBox="0 0 24 24"><defs><linearGradient id="s" x2="0" y2="1"><stop stop-color="#10163c"/><stop offset=".5" stop-color="#0e3a6b"/><stop offset="1" stop-color="#1387b8"/></linearGradient></defs><circle cx="12" cy="12" r="12" fill="url(#s)"/><path d="M.500 13.500L7 16l4.500-2 3-4.500 4 4-5 3.500q-1 4-4 3.800Q6 20.500 5.500 17.500L1 15.500z" fill="#fff"/><circle cx="15.800" cy="9" r="4.500" fill="#fff"/><circle cx="15.800" cy="9" r="3.300" fill="#12386a"/><circle cx="15.800" cy="9" r="2.400" fill="#fff"/><circle cx="8.800" cy="17.300" r="2.300" fill="none" stroke="#12386a" stroke-width=".8"/></svg>
</template>

<script>
class TemplateElement extends HTMLElement {
  constructor() {
    super();
    this.attachShadow({mode: 'open'}).append(document.getElementById(this.constructor.tpl).content.cloneNode(true));
  }
}
const define = (name, tpl, base = TemplateElement) =>
  customElements.define(name, Object.assign(class extends base {}, {tpl}));

/* Sets a run of text to a given advance width by spreading letter spacing. */
customElements.define('fit-text', class extends HTMLElement {
  constructor() {
    super();
    this.attachShadow({mode: 'open'}).innerHTML =
      '<style>:host{display:inline-block;white-space:nowrap}span{display:inline-block}</style><span><slot></slot></span>';
  }
  connectedCallback() {
    const span = this.shadowRoot.querySelector('span');
    const fit = () => {
      const want = +this.getAttribute('w');
      span.style.letterSpacing = '0px';
      const have = span.getBoundingClientRect().width;
      if (!have) return;
      span.style.letterSpacing = (want - have) / this.textContent.length + 'px';
      this.style.width = want + 'px';
    };
    fit();
    requestAnimationFrame(fit);
  }
});

class MapView extends TemplateElement {
  connectedCallback() {
    const r = this.shadowRoot;
    const labels = [
      ['Newport', 98, 1, 45], ['Trench', 102, 11.500, 36.500], ['Gortnagallon', 424.500, 39, 68], ['Crumlin', 532, 36, 41],
      ['Glenavy', 532, 111, 41.500], ['lycolpy', 0.800, 125, 37], ['gh', 0.500, 191, 13.500], ['Holywood', 1062, 7, 53],
      ['Dundrod', 667, 59.500, 45], ['Titanic Belfast', 894, 61, 89, 'teal'], ['Killarn', 1216, 83, 33.500],
      ['Dundonald', 1135, 111.500, 57], ['Castlereagh', 996, 155, 64], ['Gilnahirk', 1076, 162, 47],
      ['Stonyford', 665, 178, 52], ['Crossnacreevy', 1046, 205, 78], ['48-52 Great', 968.500, 104, 71, 'bold'],
      ['Victoria Street', 968.500, 118, 90.500, 'bold'], ['Cotton', 1412, 9, 35.500], ['Conlig', 1317.500, 25, 33],
      ['Ballyvester', 1478, 28, 58.500], ['Millisle', 1532, 75, 38.500], ['Loughriscouse', 1352, 93, 78.500],
      ['Newtownards', 1275, 115, 73.500], ['Loughries', 1354, 144, 52.500], ['Carrowdore', 1480, 157, 62],
      ['National Trust -', 1333, 195.500, 96, 'teal'], ['Mount Stewart', 1341, 211, 86, 'teal']];
    r.getElementById('labels').innerHTML = labels.map(([t, x, y, w, c = '']) =>
      `<text class="${c}" x="${x}" y="${y}" textLength="${w}">${t}</text>`).join('');
    const shields = [
      ['A52', 691.400, 3], ['A52', 888.600, 8], ['M2', 983, 16.300], ['A2', 1076, 26.300], ['A55', 1075.500, 68.300],
      ['A55', 887.800, 98], ['A20', 1080, 104], ['A20', 1230.600, 108], ['A24', 978.400, 135.300], ['M1', 902.400, 152.700],
      ['A22', 1176.300, 147.700], ['A22', 1214.700, 192.700], ['A21', 1282, 194], ['A21', 1304.800, 151.300],
      ['A24', 984, 203], ['A52', 599.200, 7.700], ['A26', 589.800, 61.300]];
    r.getElementById('shields').innerHTML = shields.map(([t, x, y]) => {
      const m = t[0] === 'M', w = t.length === 3 ? 21 : m ? 18 : 16;
      return `<rect x="${x - w / 2}" y="${y - 6.500}" width="${w}" height="13" rx="1.500" fill="${m ? '#44437c' : '#3f5b27'}"/>` +
        `<text x="${x}" y="${y + 3.700}" text-anchor="middle" style="font-size:10px;font-weight:700" fill="${m ? '#a8a8b8' : '#a8a00c'}">${t}</text>`;
    }).join('');
    let seed = 7, dots = '';
    const rnd = () => (seed = seed * 16807 % 2147483647) / 2147483647;
    for (let i = 0; i < 420; i++) {
      const c = ['#2a3a34', '#46554e', '#59645f', '#24332c', '#6f7a76', '#3c5244'][rnd() * 6 | 0];
      dots += `<rect x="${(rnd() * 38).toFixed(1)}" y="${(rnd() * 38).toFixed(1)}" width="${(1 + rnd() * 2).toFixed(1)}" height="${(1 + rnd() * 2).toFixed(1)}" fill="${c}"/>`;
    }
    r.getElementById('sat').innerHTML = dots;
  }
}
define('steam-mark', 't-steam');
define('map-view', 't-map', MapView);
define('browser-tabs', 't-tabs');
define('browser-toolbar', 't-toolbar');
define('scroll-bar', 't-scroll');
define('game-page', 't-page');
define('toast-card', 't-toast');
define('task-bar', 't-task');
define('desktop-screen', 't-desktop');
</script>
</body>
</html>
